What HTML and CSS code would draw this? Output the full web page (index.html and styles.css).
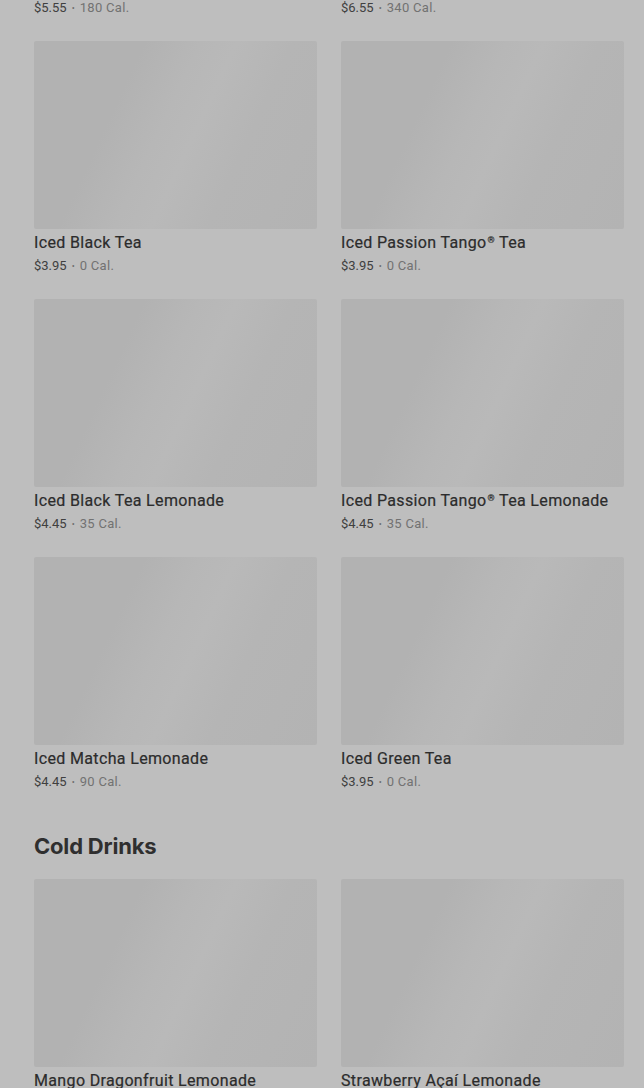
FILE: index.html
```html
<!DOCTYPE html>
<html>
<head>
<meta charset="utf-8">
<link rel="stylesheet" href="styles.css">
</head>
<body>
<main class="page">
  <div class="grid top-row">
    <p class="meta"><span class="price">$5.55</span><span class="dot">•</span><span class="cal">180 Cal.</span></p>
    <p class="meta"><span class="price">$6.55</span><span class="dot">•</span><span class="cal">340 Cal.</span></p>
  </div>
  <div class="grid">
    <article class="card"><div class="thumb"></div><h3 class="name">Iced Black Tea</h3><p class="meta"><span class="price">$3.95</span><span class="dot">•</span><span class="cal">0 Cal.</span></p></article>
    <article class="card"><div class="thumb"></div><h3 class="name">Iced Passion Tango<span class="reg">®</span> Tea</h3><p class="meta"><span class="price">$3.95</span><span class="dot">•</span><span class="cal">0 Cal.</span></p></article>
    <article class="card"><div class="thumb"></div><h3 class="name">Iced Black Tea Lemonade</h3><p class="meta"><span class="price">$4.45</span><span class="dot">•</span><span class="cal">35 Cal.</span></p></article>
    <article class="card"><div class="thumb"></div><h3 class="name">Iced Passion Tango<span class="reg">®</span> Tea Lemonade</h3><p class="meta"><span class="price">$4.45</span><span class="dot">•</span><span class="cal">35 Cal.</span></p></article>
    <article class="card"><div class="thumb"></div><h3 class="name">Iced Matcha Lemonade</h3><p class="meta"><span class="price">$4.45</span><span class="dot">•</span><span class="cal">90 Cal.</span></p></article>
    <article class="card"><div class="thumb"></div><h3 class="name">Iced Green Tea</h3><p class="meta"><span class="price">$3.95</span><span class="dot">•</span><span class="cal">0 Cal.</span></p></article>
  </div>
  <h2 class="section">Cold Drinks</h2>
  <div class="grid">
    <article class="card"><div class="thumb"></div><h3 class="name">Mango Dragonfruit Lemonade</h3><p class="meta"><span class="price">$4.95</span><span class="dot">•</span><span class="cal">90 Cal.</span></p></article>
    <article class="card"><div class="thumb"></div><h3 class="name">Strawberry Açaí Lemonade</h3><p class="meta"><span class="price">$4.95</span><span class="dot">•</span><span class="cal">110 Cal.</span></p></article>
  </div>
</main>
</body>
</html>
```
FILE: styles.css
```css
html, body {
  margin: 0;
  padding: 0;
  background: #bebebe;
  height: 1088px;
  overflow: hidden;
}
body {
  font-family: "Roboto", "Liberation Sans", sans-serif;
  color: #353535;
}
.page {
  padding: 0 20px 0 34px;
}
.grid {
  display: grid;
  grid-template-columns: 283px 283px;
  column-gap: 24px;
  row-gap: 25px;
}
.top-row {
  margin-top: -2px;
  margin-bottom: 25px;
}
.card {
  display: flex;
  flex-direction: column;
}
.thumb {
  height: 188px;
  border-radius: 2px;
  background: linear-gradient(115deg, #b2b2b2 0%, #b2b2b2 30%, #b7b7b7 45%, #b9b9b9 55%, #b5b5b5 70%, #b3b3b3 100%);
}
.name {
  margin: 4px 0 0;
  font-size: 16px;
  line-height: 20px;
  font-weight: 400;
  color: #2c2c2c;
  letter-spacing: 0.35px;
  -webkit-text-stroke: 0.2px #2c2c2c;
}
.reg {
  font-size: 9px;
  vertical-align: 5px;
  line-height: 0;
  margin-left: 1px;
}
.meta {
  margin: 3px 0 0;
  font-size: 13px;
  line-height: 18px;
  display: flex;
  align-items: center;
  position: relative;
  top: 1px;
}
.top-row .meta {
  margin: 0;
}
.price {
  color: #404040;
}
.dot {
  color: #6e6e6e;
  font-size: 9px;
  margin: 0 5px;
}
.cal {
  color: #727272;
  letter-spacing: 0.3px;
}
.section {
  margin: 42px 0 19px;
  font-family: "Inter", "Liberation Sans", sans-serif;
  font-size: 22px;
  line-height: 28px;
  font-weight: 700;
  color: #2f2f2f;
  letter-spacing: -0.2px;
}
```
